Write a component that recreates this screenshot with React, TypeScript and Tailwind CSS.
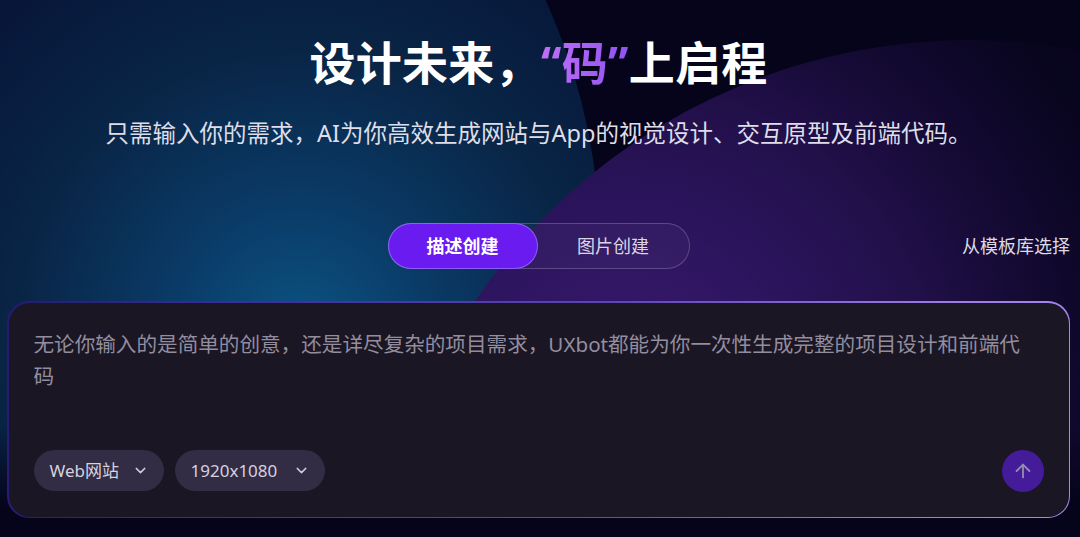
import { ArrowUp, ChevronDown } from "lucide-react";

const FONT = "font-['Noto_Sans','Noto_Sans_CJK_SC',sans-serif]";

function Chip({ label, width }: { label: string; width: string }) {
  return (
    <button
      className={`flex h-[41px] ${width} items-center justify-between rounded-full bg-[#322c44] pl-[16px] pr-[15px] text-[17px] text-[#d6d2de]`}
    >
      <span>{label}</span>
      <ChevronDown size={17} strokeWidth={2} className="text-[#cfcadb]" />
    </button>
  );
}

export default function App() {
  return (
    <div className={`relative h-[537px] w-[1080px] overflow-hidden bg-[#05041a] ${FONT}`}>
      {/* background blobs */}
      <div className="pointer-events-none absolute left-[-600px] top-[-350px] h-[1200px] w-[1200px] rounded-full bg-[radial-gradient(circle_at_75%_57%,#0b5383_0%,#0a3a66_12%,#092546_25%,#07173a_38%,#070f29_55%,#070c22_75%)]" />
      <div className="pointer-events-none absolute left-[370px] top-[40px] h-[1200px] w-[1200px] rounded-full bg-[radial-gradient(circle_at_21%_30%,#3a1a70_0%,#2e1560_13%,#22104b_24%,#140a33_33%,#09051f_42%,#05041a_55%)]" />
      <div className="pointer-events-none absolute bottom-0 left-0 h-[110px] w-full bg-[linear-gradient(to_bottom,transparent,#05041a_75%)]" />

      <div className="relative flex flex-col pl-[7px] pr-[10px] pt-[32px]">
        <h1 className="text-center text-[46px] font-bold leading-[60px] tracking-[0.3px] text-white">
          设计未来，
          <span className="bg-[linear-gradient(90deg,#c070f5,#8f52f2)] bg-clip-text text-transparent">“码”</span>
          上启程
        </h1>
        <p className="mt-[24px] text-center text-[23.5px] leading-[34px] text-[#dedde8]">
          只需输入你的需求，AI为你高效生成网站与App的视觉设计、交互原型及前端代码。
        </p>

        <div className="mt-[73px] grid grid-cols-[1fr_auto_1fr] items-center">
          <div />
          <div className="flex h-[46px] w-[302px] items-center rounded-full border border-white/20 bg-white/[0.03]">
            <button className="flex h-[46px] w-[150px] -ml-px items-center justify-center rounded-full border border-[#a78bfa]/60 bg-[#6a1cf0] text-[18px] font-semibold text-white">
              描述创建
            </button>
            <button className="flex flex-1 items-center justify-center text-[18px] text-[#d9d6e2]">
              图片创建
            </button>
          </div>
          <a className="justify-self-end text-[18px] text-[#dcdae4]">从模板库选择</a>
        </div>

        <div className="mt-[32px] rounded-[22px] bg-[linear-gradient(100deg,#241a6e_0%,#3a2c9c_20%,#5d45b8_55%,#9b7ae4_85%,#a889ee_100%)] p-[1.5px]">
          <div className="flex h-[214px] flex-col justify-between rounded-[21px] bg-[#1a1623] px-[25px] pb-[25px] pt-[25px]">
            <p className="w-[996px] text-[20.6px] leading-[32px] text-[#938d9f]">
              无论你输入的是简单的创意，还是详尽复杂的项目需求，UXbot都能为你一次性生成完整的项目设计和前端代码
            </p>
            <div className="flex items-center">
              <div className="flex gap-[11px]">
                <Chip label="Web网站" width="w-[130px]" />
                <Chip label="1920x1080" width="w-[150px]" />
              </div>
              <button className="ml-auto flex h-[42px] w-[42px] items-center justify-center rounded-full bg-[#441b98]">
                <ArrowUp size={22} strokeWidth={2} className="text-[#958db0]" />
              </button>
            </div>
          </div>
        </div>
      </div>
    </div>
  );
}
